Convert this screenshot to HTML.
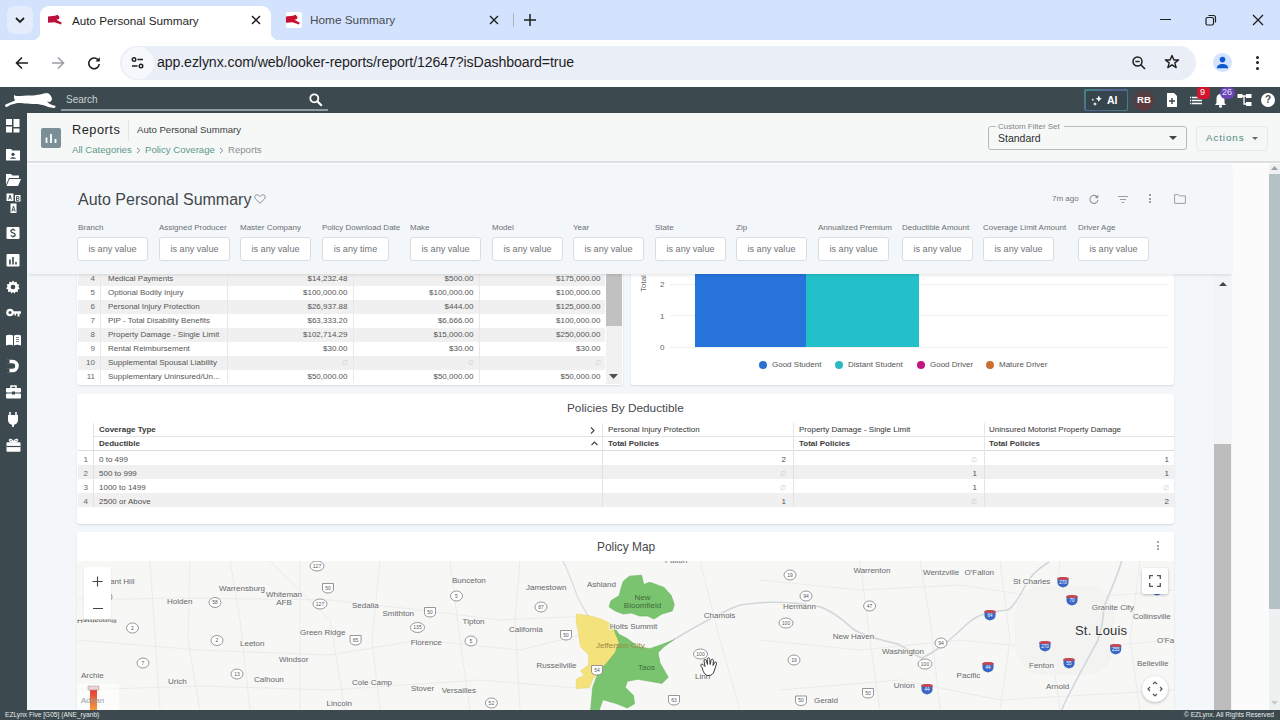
<!DOCTYPE html>
<html><head><meta charset="utf-8">
<style>
*{box-sizing:border-box;margin:0;padding:0}
html,body{width:1280px;height:720px;overflow:hidden;background:#fff;font-family:"Liberation Sans",sans-serif;position:relative}
.a{position:absolute}
.t{position:absolute;white-space:nowrap;line-height:1}
svg{position:absolute;overflow:visible}
#tabs{left:0;top:0;width:1280px;height:40px;background:#d3e3fd}
#toolbar{left:0;top:40px;width:1280px;height:47px;background:#fff}
#url{left:120px;top:46px;width:1076px;height:34px;border-radius:17px;background:#eaeef7}
#hdr{left:0;top:87px;width:1280px;height:26px;background:#3c4a4f}
#side{left:0;top:113px;width:27px;height:607px;background:#3c4a4f}
#foot{left:0;top:710px;width:1280px;height:10px;background:#3c4a4f}
#phead{left:27px;top:113px;width:1253px;height:50px;background:#f6f7f7;border-bottom:2px solid #dcdfe0}
#canvas{left:27px;top:164px;width:1242px;height:546px;background:#fbfbfb}
.card{position:absolute;background:#fff;border-radius:3px;box-shadow:0 1px 2px rgba(0,0,0,.12)}
.fl{position:absolute;top:224px;font-size:8px;color:#6b6f73;white-space:nowrap;line-height:1}
.fb{position:absolute;top:237px;height:24px;width:71px;border:1px solid #dadde0;border-radius:3px;background:#fff;font-size:9.1px;color:#707478;text-align:center;line-height:22px;white-space:nowrap}
.si{left:6px}
</style></head><body>
<!-- ============ Chrome tab strip ============ -->
<div id="tabs" class="a"></div>
<div class="a" style="left:7px;top:6px;width:26px;height:28px;border-radius:8px;background:#e5edfc"></div>
<svg style="left:14px;top:15px" width="12" height="10" viewBox="0 0 12 10"><path d="M2 3l4 4 4-4" fill="none" stroke="#1f1f1f" stroke-width="1.8"/></svg>
<!-- active tab -->
<div class="a" style="left:40px;top:6px;width:231px;height:34px;background:#fff;border-radius:9px 9px 0 0"></div>
<div class="a" style="left:32px;top:32px;width:8px;height:8px;background:radial-gradient(circle at 0 0,#d3e3fd 8px,#fff 8.5px)"></div>
<div class="a" style="left:271px;top:32px;width:8px;height:8px;background:radial-gradient(circle at 100% 0,#d3e3fd 8px,#fff 8.5px)"></div>
<svg style="left:44px;top:8px" width="24" height="24" viewBox="44 8 24 24"><path d="M48 16.5 L55 15.8 L57.5 14.8 L59.5 17 L59 19 L56.5 19.8 L61.8 22.8 L61 24.5 L54.5 22.2 L48 22.8 Z" fill="#b8123a"/></svg>
<div class="t" style="left:72px;top:15px;font-size:11.7px;color:#1f1f1f">Auto Personal Summary</div>
<svg style="left:251px;top:15px" width="10" height="10" viewBox="0 0 10 10"><path d="M1 1L9 9M9 1L1 9" stroke="#1f1f1f" stroke-width="1.5"/></svg>
<!-- second tab -->
<div class="a" style="left:286px;top:12px;width:16px;height:16px;background:#fff;border-radius:2px"></div>
<svg style="left:282px;top:8px" width="24" height="24" viewBox="44 8 24 24"><path d="M48 16.5 L55 15.8 L57.5 14.8 L59.5 17 L59 19 L56.5 19.8 L61.8 22.8 L61 24.5 L54.5 22.2 L48 22.8 Z" fill="#c8102e"/></svg>
<div class="t" style="left:310px;top:15px;font-size:11.8px;color:#474b53">Home Summary</div>
<svg style="left:489px;top:15px" width="10" height="10" viewBox="0 0 10 10"><path d="M1 1L9 9M9 1L1 9" stroke="#1f1f1f" stroke-width="1.4"/></svg>
<div class="a" style="left:513px;top:13px;width:1px;height:14px;background:#a8b4c8"></div>
<svg style="left:524px;top:14px" width="12" height="12" viewBox="0 0 12 12"><path d="M6 0V12M0 6H12" stroke="#1f1f1f" stroke-width="1.5"/></svg>
<!-- window controls -->
<div class="a" style="left:1160px;top:19px;width:11px;height:1.3px;background:#1f1f1f"></div>
<svg style="left:1205px;top:14px" width="12" height="12" viewBox="0 0 12 12"><rect x="1" y="3.5" width="7.5" height="7.5" rx="1.5" fill="none" stroke="#1f1f1f" stroke-width="1.2"/><path d="M3.5 1.5h5a2 2 0 0 1 2 2v5" fill="none" stroke="#1f1f1f" stroke-width="1.2"/></svg>
<svg style="left:1252px;top:14px" width="12" height="12" viewBox="0 0 12 12"><path d="M1 1L11 11M11 1L1 11" stroke="#1f1f1f" stroke-width="1.3"/></svg>
<!-- ============ toolbar ============ -->
<div id="toolbar" class="a"></div>
<svg style="left:15px;top:56px" width="14" height="14" viewBox="0 0 14 14"><path d="M13 7H2M7 1.5L1.5 7L7 12.5" fill="none" stroke="#1f1f1f" stroke-width="1.6"/></svg>
<svg style="left:51px;top:56px" width="14" height="14" viewBox="0 0 14 14"><path d="M1 7H12M7 1.5L12.5 7L7 12.5" fill="none" stroke="#9aa0a6" stroke-width="1.6"/></svg>
<svg style="left:87px;top:56px" width="14" height="14" viewBox="0 0 14 14"><path d="M11.5 4.5A5.3 5.3 0 1 0 12.3 8" fill="none" stroke="#1f1f1f" stroke-width="1.6"/><path d="M12.8 1.2V5.6H8.4Z" fill="#1f1f1f"/></svg>
<div id="url" class="a"></div>
<div class="a" style="left:122px;top:47px;width:32px;height:32px;border-radius:16px;background:#f6f8fc"></div>
<svg style="left:131px;top:57px" width="13" height="12" viewBox="0 0 13 12"><circle cx="3" cy="2.5" r="1.8" fill="none" stroke="#1f1f1f" stroke-width="1.4"/><path d="M6.5 2.5H12M1 9H6.5" stroke="#1f1f1f" stroke-width="1.6"/><circle cx="10" cy="9" r="1.8" fill="none" stroke="#1f1f1f" stroke-width="1.4"/></svg>
<div class="t" style="left:157px;top:55px;font-size:14.15px;color:#1f1f1f;letter-spacing:-0.1px">app.ezlynx.com/web/looker-reports/report/12647?isDashboard=true</div>
<svg style="left:1132px;top:56px" width="14" height="14" viewBox="0 0 14 14"><circle cx="5.5" cy="5.5" r="4.5" fill="none" stroke="#1f1f1f" stroke-width="1.5"/><path d="M3.3 5.5H7.7" stroke="#1f1f1f" stroke-width="1.4"/><path d="M8.8 8.8L13 13" stroke="#1f1f1f" stroke-width="1.6"/></svg>
<svg style="left:1164px;top:54px" width="16" height="16" viewBox="0 0 16 16"><path d="M8 1.5L9.9 6H14.6L10.8 8.9L12.2 13.6L8 10.8L3.8 13.6L5.2 8.9L1.4 6H6.1Z" fill="none" stroke="#1f1f1f" stroke-width="1.4" stroke-linejoin="round"/></svg>
<div class="a" style="left:1213px;top:53px;width:19px;height:19px;border-radius:10px;background:#d3e3fd"></div>
<svg style="left:1215px;top:55px" width="15" height="15" viewBox="0 0 15 15"><circle cx="7.5" cy="4.6" r="2.8" fill="#0b57d0"/><path d="M1.8 13.3C2 10 4.8 9 7.5 9S13 10 13.2 13.3Z" fill="#0b57d0"/></svg>
<div class="a" style="left:1256px;top:56px;width:3px;height:3px;border-radius:2px;background:#1f1f1f"></div>
<div class="a" style="left:1256px;top:61px;width:3px;height:3px;border-radius:2px;background:#1f1f1f"></div>
<div class="a" style="left:1256px;top:67px;width:3px;height:3px;border-radius:2px;background:#1f1f1f"></div>

<!-- ============ App header ============ -->
<div id="hdr" class="a"></div>
<svg style="left:0;top:86px" width="64" height="28" viewBox="0 86 64 28"><path d="M14 95 C15 95.5 16 96 16.5 96 C22 96 26 95.5 30 95.5 C34 95.5 37 95 40 94.5 C43 94 45 93 47 93 C49 93.5 50 94.5 50.5 95.5 C51.5 97 52 98 52 99 C51.5 101 50.5 102 49.5 102 L47 101.5 C48 102.5 49 103.5 50 104 C52 105 54 105.5 55.5 106 C55.5 107 55 108 54 108 C52 107.8 50 107.5 48 107 C46 106 44.5 105.5 43 105 C40 104.5 38 104 35 104 C31 104 28 103.8 25 103.5 C22 103.3 19.5 103 17.5 103 C15 103.8 12 104.5 10 105 C8.5 106 7.5 107 6.5 107 C5.5 107 5 106 5 105 C6.5 104 8 103.5 9 103 C11 102 13 101.3 15 100.5 C14.5 99.5 14 98.5 14 97.5Z" fill="#fff"/></svg>
<div class="t" style="left:66px;top:95px;font-size:10px;color:#c9d0d3">Search</div>
<svg style="left:309px;top:93px" width="14" height="14" viewBox="0 0 14 14"><circle cx="5.3" cy="5.3" r="4" fill="none" stroke="#fff" stroke-width="1.8"/><path d="M8.3 8.3L12.8 12.8" stroke="#fff" stroke-width="2.2"/></svg>
<div class="a" style="left:61px;top:109px;width:267px;height:2px;background:#8e9ba0"></div>
<!-- right icons -->
<div class="a" style="left:1084px;top:89px;width:44px;height:22px;border-radius:2px;background:linear-gradient(135deg,#3f8a83,#55609a 50%,#3f8a83)"></div><div class="a" style="left:1085.5px;top:90.5px;width:41px;height:19px;border-radius:1px;background:#36444b"></div>
<svg style="left:1088px;top:92px" width="16" height="16" viewBox="1088 92 16 16"><path d="M1098.8 95.5Q1099.3 98.3 1102 98.8Q1099.3 99.3 1098.8 102Q1098.3 99.3 1095.6 98.8Q1098.3 98.3 1098.8 95.5Z" fill="#fff"/><path d="M1095 102Q1095.3 103.7 1097 104Q1095.3 104.3 1095 106Q1094.7 104.3 1093 104Q1094.7 103.7 1095 102Z" fill="#f0f0f0"/><circle cx="1092.8" cy="99.8" r="1" fill="#e0e0e0"/></svg>
<div class="t" style="left:1107px;top:95px;font-size:10.5px;font-weight:bold;color:#fff">AI</div>
<div class="a" style="left:1133px;top:89px;width:22px;height:22px;border-radius:11px;background:radial-gradient(circle at 50% 60%,#5b3a40 40%,#45444a 75%,#3c4a4f 100%)"></div>
<div class="t" style="left:1137px;top:95px;font-size:9.6px;font-weight:bold;color:#fff">RB</div>
<svg style="left:1166px;top:92px" width="12" height="16" viewBox="0 0 12 16"><path d="M1 1H8L11 4V15H1Z" fill="#fff"/><path d="M6 6V12M3 9H9" stroke="#3c4a4f" stroke-width="1.5"/></svg>
<svg style="left:1189px;top:96px" width="14" height="10" viewBox="0 0 14 10"><path d="M1 1.5H13M1 4.5H13M1 7.5H13" stroke="#fff" stroke-width="1.4" stroke-dasharray="1.2 0.8 20 0"/></svg>
<div class="a" style="left:1197px;top:87px;width:13px;height:12px;border-radius:3px;background:#d0162e"></div>
<div class="t" style="left:1200px;top:88px;font-size:9px;color:#fff">9</div>
<svg style="left:1214px;top:93px" width="13" height="15" viewBox="0 0 13 15"><path d="M6.5 1C3.5 1 2.5 3.5 2.5 6V10L1 12H12L10.5 10V6C10.5 3.5 9.5 1 6.5 1Z" fill="#fff"/><circle cx="6.5" cy="13.3" r="1.5" fill="#fff"/></svg>
<div class="a" style="left:1220px;top:87px;width:15px;height:12px;border-radius:6px;background:#6a46b5"></div>
<div class="t" style="left:1222px;top:88px;font-size:9px;color:#e8e0ff">26</div>
<svg style="left:1237px;top:93px" width="15" height="14" viewBox="0 0 15 14"><rect x="0.5" y="1" width="5" height="4" fill="#fff"/><rect x="9" y="1" width="5.5" height="4" fill="#fff"/><rect x="9" y="9" width="5.5" height="4" fill="#fff"/><path d="M5 3H9M7 3V11H9" stroke="#fff" stroke-width="1.3" fill="none"/></svg>
<div class="a" style="left:1261px;top:93px;width:14px;height:14px;border-radius:7px;background:#fff"></div>
<div class="t" style="left:1265px;top:95px;font-size:10px;font-weight:bold;color:#3c4a4f">?</div>

<!-- ============ Sidebar ============ -->
<div id="side" class="a"></div>
<svg class="si" style="top:119px" width="14" height="14" viewBox="0 0 14 14"><rect x="0" y="0" width="6" height="6" fill="#fff"/><rect x="7.5" y="0" width="6" height="8" fill="#fff"/><rect x="0" y="7.5" width="6" height="6" fill="#fff"/><rect x="7.5" y="9.5" width="6" height="4" fill="#fff"/></svg>
<svg class="si" style="top:148px" width="14" height="13" viewBox="0 0 14 13"><path d="M0 1H5L6.5 2.5H14V12.5H0Z" fill="#fff"/><circle cx="7" cy="6.3" r="1.6" fill="#3c4a4f"/><path d="M4 10.8C4.5 8.8 9.5 8.8 10 10.8Z" fill="#3c4a4f"/></svg>
<svg class="si" style="top:174px" width="15" height="12" viewBox="0 0 15 12"><path d="M0 0H5L6.5 1.5H13V4H3L0 11Z" fill="#fff"/><path d="M3.5 5H15L12 12H0.5Z" fill="#fff"/></svg>
<svg class="si" style="top:193px" width="15" height="21" viewBox="0 0 15 21"><rect x="0.5" y="0.5" width="7" height="7.5" fill="#fff"/><rect x="9" y="2" width="5.5" height="6.5" fill="#fff"/><rect x="4.5" y="10.5" width="6" height="9.5" fill="#fff"/><path d="M2.5 6.5L4 2L5.5 6.5M3 5H5M10.5 7.5V3.5H12a1 1 0 0 1 0 2H10.5M12 5.5a1 1 0 0 1 0 2H10.5M5.8 18.5L7.5 13L9.2 18.5M6.3 17H8.7" stroke="#3c4a4f" stroke-width="0.9" fill="none"/></svg>
<svg class="si" style="top:227px" width="14" height="13" viewBox="0 0 14 13"><rect x="0.5" y="0" width="13" height="12" rx="1" fill="#fff"/><path d="M9 3.5C8.5 2.8 7.8 2.6 7 2.6C5.6 2.6 4.9 3.3 4.9 4.2C4.9 6.2 9.2 5.4 9.2 7.7C9.2 8.7 8.3 9.4 7 9.4C6 9.4 5.2 9 4.8 8.3M7 1.5V2.6M7 9.4V10.5" fill="none" stroke="#3c4a4f" stroke-width="1.3"/></svg>
<svg class="si" style="top:254px" width="14" height="13" viewBox="0 0 14 13"><rect x="0.5" y="0" width="13" height="12.5" rx="1" fill="#fff"/><path d="M4 10.5V5.5M7 10.5V3M10 10.5V8" stroke="#3c4a4f" stroke-width="1.6"/></svg>
<svg class="si" style="top:280px" width="14" height="14" viewBox="0 0 14 14"><path d="M7 0.5L8.4 2.3L10.6 1.7L11 4L13.3 4.6L12.4 6.7L13.8 8.4L11.8 9.6L11.9 11.9L9.6 11.7L8.4 13.6L7 12.1L5.4 13.6L4.3 11.6L2 11.9L2.1 9.6L0.2 8.4L1.5 6.6L0.7 4.5L3 4L3.4 1.7L5.6 2.3Z" fill="#fff"/><circle cx="7" cy="7" r="2.3" fill="#3c4a4f"/></svg>
<svg class="si" style="top:308px" width="15" height="10" viewBox="0 0 15 10"><circle cx="4" cy="4.5" r="3.8" fill="#fff"/><circle cx="4" cy="4.5" r="1.5" fill="#3c4a4f"/><path d="M7 3.3H15V5.7H13.5V8.5H11.5V5.7H10V7.5H8.5V5.7H7Z" fill="#fff"/></svg>
<svg class="si" style="top:334px" width="15" height="12" viewBox="0 0 15 12"><path d="M0 1.5C2.5 0.5 5 0.5 7 1.5V11.5C5 10.5 2.5 10.5 0 11.5Z" fill="#fff"/><path d="M8 1.5C10 0.5 12.5 0.5 15 1.5V11.5C12.5 10.5 10 10.5 8 11.5Z" fill="#fff"/><path d="M10 3.5H13M10 5.5H13M10 7.5H13" stroke="#3c4a4f" stroke-width="0.7"/></svg>
<svg class="si" style="top:359px" width="14" height="14" viewBox="0 0 14 14"><path d="M1 2.5H6.5A4.5 4.5 0 0 1 6.5 11.5H1" fill="none" stroke="#fff" stroke-width="3.6"/><path d="M0 2.5H3M0 11.5H3" stroke="#3c4a4f" stroke-width="4" stroke-dasharray="0"/><path d="M3.2 0.7V4.3M3.2 9.7V13.3" stroke="#3c4a4f" stroke-width="0.8"/></svg>
<svg class="si" style="top:385px" width="15" height="14" viewBox="0 0 15 14"><path d="M5 3V1H10V3" fill="none" stroke="#fff" stroke-width="1.5"/><rect x="0" y="3" width="15" height="4.5" rx="1" fill="#fff"/><rect x="0" y="8.5" width="15" height="5" rx="1" fill="#fff"/><rect x="6" y="6.5" width="3" height="3" fill="#3c4a4f"/></svg>
<svg class="si" style="top:412px" width="14" height="15" viewBox="0 0 14 15"><path d="M4 0V3M10 0V3" stroke="#fff" stroke-width="1.6"/><path d="M2 3H12V8A5 5 0 0 1 2 8Z" fill="#fff"/><path d="M7 12V15" stroke="#fff" stroke-width="1.8"/></svg>
<svg class="si" style="top:438px" width="15" height="14" viewBox="0 0 15 14"><path d="M7.5 4C6 1 3 0.5 3.5 2.5C4 4 6 4 7.5 4C9 4 11 4 11.5 2.5C12 0.5 9 1 7.5 4Z" fill="none" stroke="#fff" stroke-width="1.3"/><rect x="0.5" y="4.3" width="14" height="9.5" rx="0.8" fill="#fff"/><path d="M0.5 8.5H14.5" stroke="#3c4a4f" stroke-width="1.2"/></svg>

<!-- ============ page header ============ -->
<div id="phead" class="a"></div>
<div class="a" style="left:41px;top:128px;width:20px;height:20px;border-radius:2px;background:#7b8f96"></div>
<svg style="left:41px;top:128px" width="20" height="20" viewBox="0 0 20 20"><path d="M5.5 15V9.5M10 15V6M14.5 15V11" stroke="#fff" stroke-width="1.8"/></svg>
<div class="t" style="left:72px;top:124px;font-size:12.8px;letter-spacing:0.5px;color:#1f2326">Reports</div>
<div class="a" style="left:128px;top:120px;width:1px;height:21px;background:#e1e4e5"></div>
<div class="t" style="left:137px;top:125px;font-size:9.6px;color:#3b3f42">Auto Personal Summary</div>
<div class="t" style="left:72px;top:145px;font-size:9.6px;color:#5e9a8c">All Categories</div>
<svg style="left:136px;top:146.5px" width="5" height="7" viewBox="0 0 5 7"><path d="M1 0.8L3.8 3.5L1 6.2" fill="none" stroke="#7a8588" stroke-width="1"/></svg>
<div class="t" style="left:145px;top:145px;font-size:9.6px;color:#5e9a8c">Policy Coverage</div>
<svg style="left:219px;top:146.5px" width="5" height="7" viewBox="0 0 5 7"><path d="M1 0.8L3.8 3.5L1 6.2" fill="none" stroke="#7a8588" stroke-width="1"/></svg>
<div class="t" style="left:228px;top:145px;font-size:9.6px;color:#8a9194">Reports</div>
<!-- filter set -->
<div class="a" style="left:988px;top:126px;width:199px;height:24px;border:1px solid #b5b9bb;border-radius:3px"></div>
<div class="a" style="left:996px;top:122px;width:68px;height:8px;background:#f6f7f7"></div>
<div class="t" style="left:998px;top:123px;font-size:8px;color:#80868a">Custom Filter Set</div>
<div class="t" style="left:998px;top:133px;font-size:10.5px;color:#2b2f33">Standard</div>
<svg style="left:1169px;top:136px" width="8" height="5" viewBox="0 0 8 5"><path d="M0 0H8L4 4Z" fill="#444"/></svg>
<div class="a" style="left:1196px;top:126px;width:72px;height:25px;border:1px solid #e6e8e9;border-radius:3px;background:#f5f6f6"></div>
<div class="t" style="left:1206px;top:133px;font-size:9.8px;color:#4a8a7b;letter-spacing:0.9px">Actions</div>
<svg style="left:1252px;top:137px" width="6" height="4" viewBox="0 0 6 4"><path d="M0 0H6L3 3Z" fill="#666"/></svg>

<!-- ============ Dashboard canvas ============ -->
<div id="canvas" class="a"></div>
<div class="a" style="left:27px;top:164px;width:1205px;height:546px;background:#f4f7fa"></div>
<div id="dash"></div>
<!-- ===== filter panel ===== -->
<div class="a" style="left:27px;top:164px;width:1205px;height:110px;background:#f4f7fa;box-shadow:0 2px 3px -1px rgba(0,0,0,.12);z-index:5"></div>
<div style="position:absolute;left:0;top:0;z-index:6">
<div class="t" style="left:78px;top:192px;font-size:16px;color:#43474b">Auto Personal Summary</div>
<svg style="left:254px;top:194px" width="12" height="10" viewBox="0 0 12 10"><path d="M6 9.3L1.6 5C0.2 3.6 0.6 1 2.8 0.8C4.2 0.7 5.4 1.6 6 2.6C6.6 1.6 7.8 0.7 9.2 0.8C11.4 1 11.8 3.6 10.4 5Z" fill="none" stroke="#8a8e92" stroke-width="1"/></svg>
<div class="t" style="left:1052px;top:195px;font-size:8px;color:#6f7377">7m ago</div>
<svg style="left:1089px;top:194px" width="10" height="10" viewBox="0 0 10 10"><path d="M8.3 3.2A4 4 0 1 0 8.9 6" fill="none" stroke="#8f9498" stroke-width="1.1"/><path d="M9.3 0.8V4.2H5.9Z" fill="#8f9498"/></svg>
<svg style="left:1118px;top:194.5px" width="10" height="9" viewBox="0 0 10 9"><path d="M0 1.5H10M2 4.5H8M3.8 7.5H6.2" stroke="#9a9ea2" stroke-width="1"/></svg>
<div class="a" style="left:1149px;top:194px;width:2px;height:2px;border-radius:1px;background:#7d8185"></div>
<div class="a" style="left:1149px;top:197.5px;width:2px;height:2px;border-radius:1px;background:#7d8185"></div>
<div class="a" style="left:1149px;top:201px;width:2px;height:2px;border-radius:1px;background:#7d8185"></div>
<svg style="left:1174px;top:194px" width="12" height="10" viewBox="0 0 12 10"><path d="M0.6 0.6H4.3L5.5 1.9H11.4V9.4H0.6Z" fill="none" stroke="#9a9ea2" stroke-width="1"/></svg>
<div class="fl" style="left:78px">Branch</div>
<div class="fl" style="left:159px">Assigned Producer</div>
<div class="fl" style="left:240px">Master Company</div>
<div class="fl" style="left:322px">Policy Download Date</div>
<div class="fl" style="left:410px">Make</div>
<div class="fl" style="left:492px">Model</div>
<div class="fl" style="left:573px">Year</div>
<div class="fl" style="left:655px">State</div>
<div class="fl" style="left:736px">Zip</div>
<div class="fl" style="left:818px">Annualized Premium</div>
<div class="fl" style="left:902px">Deductible Amount</div>
<div class="fl" style="left:983px">Coverage Limit Amount</div>
<div class="fl" style="left:1078px">Driver Age</div>
<div class="fb" style="left:77px">is any value</div>
<div class="fb" style="left:159px">is any value</div>
<div class="fb" style="left:240px">is any value</div>
<div class="fb" style="left:322px;width:67px">is any time</div>
<div class="fb" style="left:410px">is any value</div>
<div class="fb" style="left:492px">is any value</div>
<div class="fb" style="left:573px">is any value</div>
<div class="fb" style="left:655px">is any value</div>
<div class="fb" style="left:736px">is any value</div>
<div class="fb" style="left:818px">is any value</div>
<div class="fb" style="left:902px">is any value</div>
<div class="fb" style="left:983px">is any value</div>
<div class="fb" style="left:1078px">is any value</div>
</div>
<!-- ===== table card ===== -->
<div class="card" style="left:77px;top:230px;width:546px;height:155px"></div>
<div class="a" style="left:78px;top:271.5px;width:527px;height:14px;background:#f0f0f0"></div>
<div class="a" style="left:78px;top:285.5px;width:527px;height:14px;background:#ffffff"></div>
<div class="a" style="left:78px;top:299.5px;width:527px;height:14px;background:#f0f0f0"></div>
<div class="a" style="left:78px;top:313.5px;width:527px;height:14px;background:#ffffff"></div>
<div class="a" style="left:78px;top:327.5px;width:527px;height:14px;background:#f0f0f0"></div>
<div class="a" style="left:78px;top:341.5px;width:527px;height:14px;background:#ffffff"></div>
<div class="a" style="left:78px;top:355.5px;width:527px;height:14px;background:#f0f0f0"></div>
<div class="a" style="left:78px;top:369.5px;width:527px;height:14px;background:#ffffff"></div>
<div class="a" style="left:100px;top:271px;width:1px;height:112px;background:#e8e8e8"></div>
<div class="a" style="left:227px;top:271px;width:1px;height:112px;background:#e8e8e8"></div>
<div class="a" style="left:353px;top:271px;width:1px;height:112px;background:#e8e8e8"></div>
<div class="a" style="left:479px;top:271px;width:1px;height:112px;background:#e8e8e8"></div>
<div class="t" style="left:60px;width:35px;text-align:right;top:275px;font-size:8px;color:#666">4</div>
<div class="t" style="left:108px;top:275px;font-size:8px;color:#555">Medical Payments</div>
<div class="t" style="left:267.5px;width:80px;text-align:right;top:275px;font-size:8px;color:#555">$14,232.48</div>
<div class="t" style="left:393.5px;width:80px;text-align:right;top:275px;font-size:8px;color:#555">$500.00</div>
<div class="t" style="left:520.5px;width:80px;text-align:right;top:275px;font-size:8px;color:#555">$175,000.00</div>
<div class="t" style="left:60px;width:35px;text-align:right;top:289px;font-size:8px;color:#666">5</div>
<div class="t" style="left:108px;top:289px;font-size:8px;color:#555">Optional Bodily Injury</div>
<div class="t" style="left:267.5px;width:80px;text-align:right;top:289px;font-size:8px;color:#555">$100,000.00</div>
<div class="t" style="left:393.5px;width:80px;text-align:right;top:289px;font-size:8px;color:#555">$100,000.00</div>
<div class="t" style="left:520.5px;width:80px;text-align:right;top:289px;font-size:8px;color:#555">$100,000.00</div>
<div class="t" style="left:60px;width:35px;text-align:right;top:303px;font-size:8px;color:#666">6</div>
<div class="t" style="left:108px;top:303px;font-size:8px;color:#555">Personal Injury Protection</div>
<div class="t" style="left:267.5px;width:80px;text-align:right;top:303px;font-size:8px;color:#555">$26,937.88</div>
<div class="t" style="left:393.5px;width:80px;text-align:right;top:303px;font-size:8px;color:#555">$444.00</div>
<div class="t" style="left:520.5px;width:80px;text-align:right;top:303px;font-size:8px;color:#555">$125,000.00</div>
<div class="t" style="left:60px;width:35px;text-align:right;top:317px;font-size:8px;color:#666">7</div>
<div class="t" style="left:108px;top:317px;font-size:8px;color:#555">PIP - Total Disability Benefits</div>
<div class="t" style="left:267.5px;width:80px;text-align:right;top:317px;font-size:8px;color:#555">$63,333.20</div>
<div class="t" style="left:393.5px;width:80px;text-align:right;top:317px;font-size:8px;color:#555">$6,666.00</div>
<div class="t" style="left:520.5px;width:80px;text-align:right;top:317px;font-size:8px;color:#555">$100,000.00</div>
<div class="t" style="left:60px;width:35px;text-align:right;top:331px;font-size:8px;color:#666">8</div>
<div class="t" style="left:108px;top:331px;font-size:8px;color:#555">Property Damage - Single Limit</div>
<div class="t" style="left:267.5px;width:80px;text-align:right;top:331px;font-size:8px;color:#555">$102,714.29</div>
<div class="t" style="left:393.5px;width:80px;text-align:right;top:331px;font-size:8px;color:#555">$15,000.00</div>
<div class="t" style="left:520.5px;width:80px;text-align:right;top:331px;font-size:8px;color:#555">$250,000.00</div>
<div class="t" style="left:60px;width:35px;text-align:right;top:345px;font-size:8px;color:#666">9</div>
<div class="t" style="left:108px;top:345px;font-size:8px;color:#555">Rental Reimbursement</div>
<div class="t" style="left:267.5px;width:80px;text-align:right;top:345px;font-size:8px;color:#555">$30.00</div>
<div class="t" style="left:393.5px;width:80px;text-align:right;top:345px;font-size:8px;color:#555">$30.00</div>
<div class="t" style="left:520.5px;width:80px;text-align:right;top:345px;font-size:8px;color:#555">$30.00</div>
<div class="t" style="left:60px;width:35px;text-align:right;top:359px;font-size:8px;color:#666">10</div>
<div class="t" style="left:108px;top:359px;font-size:8px;color:#555">Supplemental Spousal Liability</div>
<div class="t" style="left:287.5px;width:60px;text-align:right;top:359px;font-size:7px;color:#d4d4d4">∅</div>
<div class="t" style="left:413.5px;width:60px;text-align:right;top:359px;font-size:7px;color:#d4d4d4">∅</div>
<div class="t" style="left:540.5px;width:60px;text-align:right;top:359px;font-size:7px;color:#d4d4d4">∅</div>
<div class="t" style="left:60px;width:35px;text-align:right;top:373px;font-size:8px;color:#666">11</div>
<div class="t" style="left:108px;top:373px;font-size:8px;color:#555">Supplementary Uninsured/Un...</div>
<div class="t" style="left:267.5px;width:80px;text-align:right;top:373px;font-size:8px;color:#555">$50,000.00</div>
<div class="t" style="left:393.5px;width:80px;text-align:right;top:373px;font-size:8px;color:#555">$50,000.00</div>
<div class="t" style="left:520.5px;width:80px;text-align:right;top:373px;font-size:8px;color:#555">$50,000.00</div>
<div class="a" style="left:606px;top:271px;width:16px;height:113px;background:#f1f1f1"></div>
<div class="a" style="left:606px;top:271px;width:16px;height:55px;background:#c1c1c1"></div>
<svg style="left:609px;top:374px" width="9" height="5" viewBox="0 0 9 5"><path d="M0 0H9L4.5 5Z" fill="#505050"/></svg>
<!-- ===== chart card ===== -->
<div class="card" style="left:631px;top:230px;width:543px;height:155px"></div>
<div class="a" style="left:670px;top:284px;width:498px;height:1px;background:#f0f0f0"></div>
<div class="a" style="left:670px;top:315px;width:498px;height:1px;background:#f0f0f0"></div>
<div class="a" style="left:670px;top:347px;width:498px;height:1px;background:#f0f0f0"></div>
<div class="a" style="left:695px;top:270px;width:111px;height:77px;background:#2674db"></div>
<div class="a" style="left:806px;top:270px;width:113px;height:77px;background:#22c1c9"></div>
<div class="t" style="left:660px;top:281px;font-size:8px;color:#666">2</div>
<div class="t" style="left:660px;top:312.5px;font-size:8px;color:#666">1</div>
<div class="t" style="left:660px;top:344px;font-size:8px;color:#666">0</div>
<div class="t" style="left:640px;top:292px;font-size:8px;color:#666;transform:rotate(-90deg);transform-origin:0 0">Total</div>
<div class="a" style="left:759px;top:361px;width:8px;height:8px;border-radius:4px;background:#2a6fd1"></div>
<div class="t" style="left:772px;top:361px;font-size:8px;color:#555">Good Student</div>
<div class="a" style="left:835px;top:361px;width:8px;height:8px;border-radius:4px;background:#2bb8c0"></div>
<div class="t" style="left:848px;top:361px;font-size:8px;color:#555">Distant Student</div>
<div class="a" style="left:917px;top:361px;width:8px;height:8px;border-radius:4px;background:#c6137e"></div>
<div class="t" style="left:930px;top:361px;font-size:8px;color:#555">Good Driver</div>
<div class="a" style="left:986px;top:361px;width:8px;height:8px;border-radius:4px;background:#c87132"></div>
<div class="t" style="left:999px;top:361px;font-size:8px;color:#555">Mature Driver</div>
<!-- ===== dashboard scrollbar ===== -->
<div class="a" style="left:1214px;top:274px;width:18px;height:436px;background:#f2f4f6"></div>
<svg style="left:1218.5px;top:282px" width="8" height="4" viewBox="0 0 8 4"><path d="M0 4H8L4 0Z" fill="#444"/></svg>
<div class="a" style="left:1214px;top:444px;width:17px;height:266px;background:#bdbdbd"></div>
<!-- ===== policies by deductible ===== -->
<div class="card" style="left:77px;top:394px;width:1097px;height:130px"></div>
<div class="t" style="left:567px;top:403px;font-size:11.8px;color:#45494d">Policies By Deductible</div>
<div class="a" style="left:93px;top:423px;width:1px;height:84px;background:#e3e3e3"></div>
<div class="a" style="left:93px;top:436px;width:1081px;height:1px;background:#e3e3e3"></div>
<div class="a" style="left:78px;top:450px;width:1096px;height:1px;background:#dcdcdc"></div>
<div class="a" style="left:602px;top:423px;width:1px;height:84px;background:#e6e6e6"></div>
<div class="a" style="left:793px;top:423px;width:1px;height:84px;background:#e6e6e6"></div>
<div class="a" style="left:984px;top:423px;width:1px;height:84px;background:#e6e6e6"></div>
<div class="t" style="left:99px;top:426px;font-size:8px;font-weight:bold;color:#3a3a3a">Coverage Type</div>
<div class="t" style="left:99px;top:439.5px;font-size:8px;font-weight:bold;color:#3a3a3a">Deductible</div>
<svg style="left:590px;top:427px" width="5" height="7" viewBox="0 0 5 7"><path d="M1 0.5L4 3.5L1 6.5" fill="none" stroke="#444" stroke-width="1.1"/></svg>
<svg style="left:591px;top:441px" width="7" height="5" viewBox="0 0 7 5"><path d="M0.5 4L3.5 1L6.5 4" fill="none" stroke="#444" stroke-width="1.1"/></svg>
<div class="t" style="left:608px;top:426px;font-size:8px;color:#333">Personal Injury Protection</div>
<div class="t" style="left:608px;top:439.5px;font-size:8px;font-weight:bold;color:#3a3a3a">Total Policies</div>
<div class="t" style="left:799px;top:426px;font-size:8px;color:#333">Property Damage - Single Limit</div>
<div class="t" style="left:799px;top:439.5px;font-size:8px;font-weight:bold;color:#3a3a3a">Total Policies</div>
<div class="t" style="left:989px;top:426px;font-size:8px;color:#333">Uninsured Motorist Property Damage</div>
<div class="t" style="left:989px;top:439.5px;font-size:8px;font-weight:bold;color:#3a3a3a">Total Policies</div>
<div class="a" style="left:78px;top:465px;width:1096px;height:14px;background:#f0f0f0"></div>
<div class="a" style="left:78px;top:493px;width:1096px;height:14px;background:#f0f0f0"></div>
<div class="a" style="left:93px;top:451px;width:1px;height:56px;background:#e3e3e3"></div>
<div class="a" style="left:602px;top:451px;width:1px;height:56px;background:#e3e3e3"></div>
<div class="a" style="left:793px;top:451px;width:1px;height:56px;background:#e3e3e3"></div>
<div class="a" style="left:984px;top:451px;width:1px;height:56px;background:#e3e3e3"></div>
<div class="t" style="left:70px;width:18px;text-align:right;top:455.5px;font-size:8px;color:#666">1</div>
<div class="t" style="left:99px;top:455.5px;font-size:8px;color:#4f4f4f">0 to 499</div>
<div class="t" style="left:746px;width:40px;text-align:right;top:455.5px;font-size:8px;color:#4f4f4f">2</div>
<div class="t" style="left:937px;width:40px;text-align:right;top:455.5px;font-size:7px;color:#d0d0d0">∅</div>
<div class="t" style="left:1129px;width:40px;text-align:right;top:455.5px;font-size:8px;color:#4f4f4f">1</div>
<div class="t" style="left:70px;width:18px;text-align:right;top:469.5px;font-size:8px;color:#666">2</div>
<div class="t" style="left:99px;top:469.5px;font-size:8px;color:#4f4f4f">500 to 999</div>
<div class="t" style="left:746px;width:40px;text-align:right;top:469.5px;font-size:7px;color:#d0d0d0">∅</div>
<div class="t" style="left:937px;width:40px;text-align:right;top:469.5px;font-size:8px;color:#4f4f4f">1</div>
<div class="t" style="left:1129px;width:40px;text-align:right;top:469.5px;font-size:8px;color:#4f4f4f">1</div>
<div class="t" style="left:70px;width:18px;text-align:right;top:483.5px;font-size:8px;color:#666">3</div>
<div class="t" style="left:99px;top:483.5px;font-size:8px;color:#4f4f4f">1000 to 1499</div>
<div class="t" style="left:746px;width:40px;text-align:right;top:483.5px;font-size:7px;color:#d0d0d0">∅</div>
<div class="t" style="left:937px;width:40px;text-align:right;top:483.5px;font-size:8px;color:#4f4f4f">1</div>
<div class="t" style="left:1129px;width:40px;text-align:right;top:483.5px;font-size:7px;color:#d0d0d0">∅</div>
<div class="t" style="left:70px;width:18px;text-align:right;top:497.5px;font-size:8px;color:#666">4</div>
<div class="t" style="left:99px;top:497.5px;font-size:8px;color:#4f4f4f">2500 or Above</div>
<div class="t" style="left:746px;width:40px;text-align:right;top:497.5px;font-size:8px;color:#4f4f4f">1</div>
<div class="t" style="left:937px;width:40px;text-align:right;top:497.5px;font-size:7px;color:#d0d0d0">∅</div>
<div class="t" style="left:1129px;width:40px;text-align:right;top:497.5px;font-size:8px;color:#4f4f4f">2</div>
<!-- ===== map card ===== -->
<div class="card" style="left:77px;top:532px;width:1097px;height:200px"></div>
<div class="t" style="left:597px;top:542px;font-size:11.9px;color:#45494d">Policy Map</div>
<div class="a" style="left:1157px;top:541px;width:2px;height:2px;border-radius:1px;background:#888"></div>
<div class="a" style="left:1157px;top:544.5px;width:2px;height:2px;border-radius:1px;background:#888"></div>
<div class="a" style="left:1157px;top:548px;width:2px;height:2px;border-radius:1px;background:#888"></div>
<div id="map" class="a" style="left:77px;top:561px;width:1097px;height:149px;overflow:hidden"></div>
<!--MAP-->
<svg style="left:77px;top:561px;overflow:hidden" width="1097" height="149" viewBox="77 561 1097 149">
<rect x="77" y="561" width="1097" height="149" fill="#f7f7f5"/>
<path d="M150 561 L160 710" fill="none" stroke="#ebebe9" stroke-width="1"/>
<path d="M190 561 L188 640 L200 710" fill="none" stroke="#ebebe9" stroke-width="1"/>
<path d="M300 561 L300 710" fill="none" stroke="#ebebe9" stroke-width="1"/>
<path d="M270 561 L330 620 L345 710" fill="none" stroke="#ebebe9" stroke-width="1"/>
<path d="M380 561 L372 640 L380 710" fill="none" stroke="#ebebe9" stroke-width="1"/>
<path d="M77 640 L200 650 L330 655 L420 640 L520 650 L600 630" fill="none" stroke="#ebebe9" stroke-width="1"/>
<path d="M77 600 L180 598 L330 600 L420 610 L500 620 L590 616" fill="none" stroke="#ebebe9" stroke-width="1"/>
<path d="M230 561 L240 620 L250 710" fill="none" stroke="#ebebe9" stroke-width="1"/>
<path d="M450 561 L460 640 L470 710" fill="none" stroke="#ebebe9" stroke-width="1"/>
<path d="M520 561 L515 620 L520 710" fill="none" stroke="#ebebe9" stroke-width="1"/>
<path d="M77 690 L200 686 L330 690 L480 680 L600 690" fill="none" stroke="#ebebe9" stroke-width="1"/>
<path d="M700 561 L720 640 L740 710" fill="none" stroke="#ebebe9" stroke-width="1"/>
<path d="M860 561 L870 640 L880 710" fill="none" stroke="#ebebe9" stroke-width="1"/>
<path d="M760 640 L860 650 L960 640 L1060 650 L1174 640" fill="none" stroke="#ebebe9" stroke-width="1"/>
<path d="M760 580 L860 590 L960 585 L1060 600 L1174 590" fill="none" stroke="#ebebe9" stroke-width="1"/>
<path d="M920 561 L930 620 L940 710" fill="none" stroke="#ebebe9" stroke-width="1"/>
<path d="M1000 561 L1010 640 L1000 710" fill="none" stroke="#ebebe9" stroke-width="1"/>
<path d="M780 690 L900 680 L1000 700 L1174 690" fill="none" stroke="#ebebe9" stroke-width="1"/>
<path d="M1060 561 L1050 640 L1060 710" fill="none" stroke="#ebebe9" stroke-width="1"/>
<path d="M1140 561 L1130 640 L1140 710" fill="none" stroke="#ebebe9" stroke-width="1"/>
<rect x="1015" y="585" width="100" height="90" rx="30" fill="#f3f3f1"/>
<path d="M563 561 C570 575 575 590 578 598 C582 606 586 612 588 616" fill="none" stroke="#d9dcde" stroke-width="1.2"/>
<path d="M674 639.5 C690 630 720 612 740 605 C770 600 800 603 819 606.6 C830 610 840 617 853 629 C862 635 880 640 898 644 C910 650 915 656 922 658 C935 652 946 644 967 624 C975 617 980 613 1008 610 C1015 605 1020 596 1025 586 C1030 576 1039 568 1049 562" fill="none" stroke="#d3d7da" stroke-width="1.6"/>
<path d="M1121.6 561 C1118 575 1111 589 1104 606.6 C1103 615 1104 623 1097.5 641 C1090 655 1084 665 1070 692.5 C1066 700 1063 706 1062 710" fill="none" stroke="#d3d7da" stroke-width="1.6"/>
<polygon points="576.3,614 590.6,616 600.8,619.1 612,624.2 615.1,632.3 619.2,642.6 615.1,652.8 606.9,663 598.8,671.1 592.7,679.3 589.6,687.4 576.3,688.5 576.3,679.3 584.5,675.2 580.4,671.1 588.6,665 588.6,654.8 580.4,646.6 578.4,632.3 576.3,622.1" fill="#f4e37c" stroke="#e8d46a" stroke-width="0.6"/>
<polygon points="623.3,581.3 629.4,576.2 641.6,575.2 643.7,584.4 649.8,582.3 655.9,584.4 664.1,587.4 671.2,595.6 674.3,604.8 672.2,610.9 662,614 653.9,619.1 647.8,616 639.6,616 631.4,613 623.3,614 615.1,610.9 609,606.8 611,600.7 619.2,595.6 621.2,587.4" fill="#7bc46f" stroke="#64b35c" stroke-width="0.6"/>
<polygon points="612,624.2 619.2,634.4 627.3,638.5 637.6,646.6 649.8,648.7 662,644.6 674.3,639.5 664.1,646.6 658,652.8 660,663 668.2,677.2 662,683.4 649.8,681.3 637.6,679.3 627.3,681.3 625.3,687.4 633.5,695.6 634.5,703.8 627.3,707.9 617.1,703.8 602.9,699.7 598.8,711 590.6,711 592.7,687.4 598.8,671.1 606.9,663 615.1,652.8 619.2,642.6 615.1,632.3" fill="#7bc46f" stroke="#64b35c" stroke-width="0.6"/>
<g font-family="Liberation Sans" font-size="8" fill="#66696c" stroke="#f7f7f5" stroke-width="1.6" paint-order="stroke">
<text x="110" y="583.9">ant Hill</text>
<text x="219" y="590.9">Warrensburg</text>
<text x="167" y="604.4">Holden</text>
<text x="352" y="608.4">Sedalia</text>
<text x="382.5" y="615.9">Smithton</text>
<text x="240" y="646.4">Leeton</text>
<text x="300" y="634.9">Green Ridge</text>
<text x="279" y="661.9">Windsor</text>
<text x="81" y="677.9">Archie</text>
<text x="168" y="684.4">Urich</text>
<text x="254" y="682.4">Calhoun</text>
<text x="352" y="684.9">Cole Camp</text>
<text x="326.5" y="705.9">Lincoln</text>
<text x="452" y="582.9">Bunceton</text>
<text x="526" y="589.9">Jamestown</text>
<text x="587" y="586.9">Ashland</text>
<text x="462.6" y="623.9">Tipton</text>
<text x="509" y="632.4">California</text>
<text x="410.7" y="644.9">Florence</text>
<text x="536.5" y="668.4">Russellville</text>
<text x="411" y="690.9">Stover</text>
<text x="441.7" y="693.4">Versailles</text>
<text x="609.7" y="628.9">Holts Summit</text>
<text x="703.8" y="617.9">Chamois</text>
<text x="695" y="679.4">Linn</text>
<text x="853.4" y="572.9">Warrenton</text>
<text x="923" y="575.4">Wentzville</text>
<text x="964.5" y="575.4">O&#39;Fallon</text>
<text x="1013" y="583.9">St Charles</text>
<text x="1091.7" y="609.9">Granite City</text>
<text x="1133" y="618.9">Collinsville</text>
<text x="1157" y="642.9">O&#39;Fall</text>
<text x="1137" y="665.9">Belleville</text>
<text x="783" y="608.9">Hermann</text>
<text x="832.8" y="638.9">New Haven</text>
<text x="882" y="654.4">Washington</text>
<text x="1029" y="668.4">Fenton</text>
<text x="956.6" y="677.9">Pacific</text>
<text x="893.7" y="687.9">Union</text>
<text x="1046" y="689.4">Arnold</text>
<text x="814" y="703.4">Gerald</text>
<text x="665" y="563.4">Fulton</text>
<text x="284" y="596.9" text-anchor="middle">Whiteman</text><text x="284" y="604.9" text-anchor="middle">AFB</text>
<defs><clipPath id="hc"><rect x="77" y="619.5" width="40" height="8"/></clipPath></defs><g clip-path="url(#hc)"><text transform="translate(0 1244) scale(1 -1)" x="77" y="626" font-family="Liberation Sans" font-size="8" fill="#555">Harrisonvill</text></g>
</g>
<g font-family="Liberation Sans" font-size="8">
<text x="642.5" y="599.9" text-anchor="middle" fill="#3d6e3a">New</text><text x="642.5" y="607.9" text-anchor="middle" fill="#3d6e3a">Bloomfield</text>
<text x="596" y="647.9" fill="#9a8a40">Jefferson City</text>
<text x="638" y="669.9" fill="#3d6e3a">Taos</text>
</g>
<text x="1075" y="634.5" font-family="Liberation Sans" font-size="13" fill="#2f3235" stroke="#f7f7f5" stroke-width="0.4" paint-order="stroke" textLength="52">St. Louis</text>
<g font-family="Liberation Sans" font-size="5" text-anchor="middle" fill="#555">
<ellipse cx="132.5" cy="628" rx="6" ry="5" fill="#fff" stroke="#8c8c8c" stroke-width="0.9"/>
<text x="132.5" y="629.6" stroke="none">2</text>
<ellipse cx="217" cy="640.5" rx="6" ry="5" fill="#fff" stroke="#8c8c8c" stroke-width="0.9"/>
<text x="217" y="642.1" stroke="none">2</text>
<ellipse cx="143" cy="663" rx="6" ry="5" fill="#fff" stroke="#8c8c8c" stroke-width="0.9"/>
<text x="143" y="664.6" stroke="none">7</text>
<ellipse cx="237" cy="674" rx="6" ry="5" fill="#fff" stroke="#8c8c8c" stroke-width="0.9"/>
<text x="237" y="675.6" stroke="none">13</text>
<ellipse cx="215" cy="602.5" rx="6" ry="5" fill="#fff" stroke="#8c8c8c" stroke-width="0.9"/>
<text x="215" y="604.1" stroke="none">58</text>
<ellipse cx="317" cy="566" rx="7" ry="5" fill="#fff" stroke="#8c8c8c" stroke-width="0.9"/>
<text x="317" y="567.6" stroke="none">127</text>
<ellipse cx="320" cy="604" rx="7" ry="5" fill="#fff" stroke="#8c8c8c" stroke-width="0.9"/>
<text x="320" y="605.6" stroke="none">127</text>
<ellipse cx="456.5" cy="596" rx="6" ry="5" fill="#fff" stroke="#8c8c8c" stroke-width="0.9"/>
<text x="456.5" y="597.6" stroke="none">5</text>
<ellipse cx="541" cy="607" rx="6" ry="5" fill="#fff" stroke="#8c8c8c" stroke-width="0.9"/>
<text x="541" y="608.6" stroke="none">87</text>
<ellipse cx="417.5" cy="627.5" rx="7" ry="5" fill="#fff" stroke="#8c8c8c" stroke-width="0.9"/>
<text x="417.5" y="629.1" stroke="none">135</text>
<ellipse cx="471" cy="641" rx="6" ry="5" fill="#fff" stroke="#8c8c8c" stroke-width="0.9"/>
<text x="471" y="642.6" stroke="none">5</text>
<ellipse cx="491.4" cy="703" rx="6" ry="5" fill="#fff" stroke="#8c8c8c" stroke-width="0.9"/>
<text x="491.4" y="704.6" stroke="none">52</text>
<ellipse cx="700.5" cy="654" rx="7" ry="5" fill="#fff" stroke="#8c8c8c" stroke-width="0.9"/>
<text x="700.5" y="655.6" stroke="none">100</text>
<ellipse cx="790" cy="575" rx="6" ry="5" fill="#fff" stroke="#8c8c8c" stroke-width="0.9"/>
<text x="790" y="576.6" stroke="none">19</text>
<ellipse cx="806" cy="596" rx="6" ry="5" fill="#fff" stroke="#8c8c8c" stroke-width="0.9"/>
<text x="806" y="597.6" stroke="none">94</text>
<ellipse cx="869.6" cy="606" rx="6" ry="5" fill="#fff" stroke="#8c8c8c" stroke-width="0.9"/>
<text x="869.6" y="607.6" stroke="none">47</text>
<ellipse cx="786" cy="623" rx="7" ry="5" fill="#fff" stroke="#8c8c8c" stroke-width="0.9"/>
<text x="786" y="624.6" stroke="none">100</text>
<ellipse cx="941" cy="643" rx="6" ry="5" fill="#fff" stroke="#8c8c8c" stroke-width="0.9"/>
<text x="941" y="644.6" stroke="none">94</text>
<ellipse cx="794" cy="660" rx="6" ry="5" fill="#fff" stroke="#8c8c8c" stroke-width="0.9"/>
<text x="794" y="661.6" stroke="none">19</text>
<ellipse cx="925" cy="664" rx="7" ry="5" fill="#fff" stroke="#8c8c8c" stroke-width="0.9"/>
<text x="925" y="665.6" stroke="none">100</text>
<ellipse cx="106" cy="597" rx="6" ry="5" fill="#fff" stroke="#8c8c8c" stroke-width="0.9"/>
<path d="M322.5 583.5 H333.5 V589 Q333.5 592.8 328 593 Q322.5 592.8 322.5 589Z" fill="#fff" stroke="#8a8a8a" stroke-width="0.9"/>
<text x="328" y="589.8" stroke="none">50</text>
<path d="M350.1 635.5 H361.1 V641 Q361.1 644.8 355.6 645 Q350.1 644.8 350.1 641Z" fill="#fff" stroke="#8a8a8a" stroke-width="0.9"/>
<text x="355.6" y="641.8" stroke="none">65</text>
<path d="M424.5 607.5 H435.5 V613 Q435.5 616.8 430 617 Q424.5 616.8 424.5 613Z" fill="#fff" stroke="#8a8a8a" stroke-width="0.9"/>
<text x="430" y="613.8" stroke="none">50</text>
<path d="M560.5 630.5 H571.5 V636 Q571.5 639.8 566 640 Q560.5 639.8 560.5 636Z" fill="#fff" stroke="#8a8a8a" stroke-width="0.9"/>
<text x="566" y="636.8" stroke="none">50</text>
<path d="M668.5 695.5 H679.5 V701 Q679.5 704.8 674 705 Q668.5 704.8 668.5 701Z" fill="#fff" stroke="#8a8a8a" stroke-width="0.9"/>
<text x="674" y="701.8" stroke="none">63</text>
<path d="M862.5 688.5 H873.5 V694 Q873.5 697.8 868 698 Q862.5 697.8 862.5 694Z" fill="#fff" stroke="#8a8a8a" stroke-width="0.9"/>
<text x="868" y="694.8" stroke="none">50</text>
<path d="M795.5 696.0 H806.5 V701.5 Q806.5 705.3 801 705.5 Q795.5 705.3 795.5 701.5Z" fill="#fff" stroke="#8a8a8a" stroke-width="0.9"/>
<text x="801" y="702.3" stroke="none">50</text>
<path d="M591.5 665.5 H602.5 V671 Q602.5 674.8 597 675 Q591.5 674.8 591.5 671Z" fill="#fff" stroke="#8a8a8a" stroke-width="0.9"/>
<text x="597" y="671.8" stroke="none">54</text>
</g>
<g font-family="Liberation Sans" font-size="4.5" text-anchor="middle" fill="#fff">
<path d="M1057.5 578 Q1063 576 1068.5 578 V583 Q1068 586.5 1063 587.5 Q1058 586.5 1057.5 583Z" fill="#3b66c4"/>
<path d="M1057.5 578 Q1063 576 1068.5 578 V579.8 H1057.5Z" fill="#d04646"/>
<text x="1063" y="584">270</text>
<path d="M1066.5 596 Q1072 594 1077.5 596 V601 Q1077 604.5 1072 605.5 Q1067 604.5 1066.5 601Z" fill="#3b66c4"/>
<path d="M1066.5 596 Q1072 594 1077.5 596 V597.8 H1066.5Z" fill="#d04646"/>
<text x="1072" y="602">70</text>
<path d="M984.5 611 Q990 609 995.5 611 V616 Q995 619.5 990 620.5 Q985 619.5 984.5 616Z" fill="#3b66c4"/>
<path d="M984.5 611 Q990 609 995.5 611 V612.8 H984.5Z" fill="#d04646"/>
<text x="990" y="617">64</text>
<path d="M1039.5 642 Q1045 640 1050.5 642 V647 Q1050 650.5 1045 651.5 Q1040 650.5 1039.5 647Z" fill="#3b66c4"/>
<path d="M1039.5 642 Q1045 640 1050.5 642 V643.8 H1039.5Z" fill="#d04646"/>
<text x="1045" y="648">270</text>
<path d="M1063.5 659 Q1069 657 1074.5 659 V664 Q1074 667.5 1069 668.5 Q1064 667.5 1063.5 664Z" fill="#3b66c4"/>
<path d="M1063.5 659 Q1069 657 1074.5 659 V660.8 H1063.5Z" fill="#d04646"/>
<text x="1069" y="665">55</text>
<path d="M982.5 663 Q988 661 993.5 663 V668 Q993 671.5 988 672.5 Q983 671.5 982.5 668Z" fill="#3b66c4"/>
<path d="M982.5 663 Q988 661 993.5 663 V664.8 H982.5Z" fill="#d04646"/>
<text x="988" y="669">44</text>
<path d="M921.5 685 Q927 683 932.5 685 V690 Q932 693.5 927 694.5 Q922 693.5 921.5 690Z" fill="#3b66c4"/>
<path d="M921.5 685 Q927 683 932.5 685 V686.8 H921.5Z" fill="#d04646"/>
<text x="927" y="691">44</text>
<path d="M1110.2 645 Q1115.7 643 1121.2 645 V650 Q1120.7 653.5 1115.7 654.5 Q1110.7 653.5 1110.2 650Z" fill="#3b66c4"/>
<path d="M1110.2 645 Q1115.7 643 1121.2 645 V646.8 H1110.2Z" fill="#d04646"/>
<text x="1115.7" y="651">255</text>
<path d="M1151.5 586 Q1157 584 1162.5 586 V591 Q1162 594.5 1157 595.5 Q1152 594.5 1151.5 591Z" fill="#3b66c4"/>
<path d="M1151.5 586 Q1157 584 1162.5 586 V587.8 H1151.5Z" fill="#d04646"/>
<text x="1157" y="592">27</text>
</g>
<rect x="77" y="684" width="42" height="26" fill="#ffffff" fill-opacity="0.6"/>
<defs><linearGradient id="lg" x1="0" y1="0" x2="0" y2="1"><stop offset="0" stop-color="#e23a3a"/><stop offset="1" stop-color="#f39a3a"/></linearGradient></defs>
<rect x="90" y="689" width="7" height="21" fill="url(#lg)"/>
<rect x="88" y="686" width="11" height="4" fill="#f0d0d0" stroke="#999" stroke-width="0.5"/>
<text x="81" y="703" font-family="Liberation Sans" font-size="8" fill="#9aa0a6">Adrian</text>
<path d="M702 667.5 C700 665.5 701 663 703 664.5 L705 666.5 L704 661 C703.8 659 706 658.8 706.5 661 L707.5 664.5 L707.2 659.5 C707.2 657.3 709.6 657.3 709.7 659.5 L710.2 664.5 L711 660.5 C711.4 658.5 713.6 658.8 713.4 661 L713 665.5 L714.3 663 C715 661.2 717 662 716.4 664 L714.2 671 C713.3 674 711.5 675.5 709 675.5 L707.5 675.5 C705.5 675.2 704.5 673.5 703.3 671.5 Z" fill="#fff" stroke="#222" stroke-width="0.9" stroke-linejoin="round"/>
</svg>
<div class="a" style="left:84px;top:567px;width:27px;height:52px;background:#fff;border-radius:2px;box-shadow:0 1px 2px rgba(0,0,0,.12)"></div>
<svg style="left:92px;top:576px" width="11" height="11" viewBox="0 0 11 11"><path d="M5.5 0.5V10.5M0.5 5.5H10.5" stroke="#444" stroke-width="1.1"/></svg>
<div class="a" style="left:92.5px;top:607.5px;width:10px;height:1.1px;background:#444"></div>
<div class="a" style="left:1142px;top:568px;width:26px;height:26px;background:#fff;border-radius:2px;box-shadow:0 1px 3px rgba(0,0,0,.25)"></div>
<svg style="left:1149px;top:575px" width="12" height="12" viewBox="0 0 12 12"><path d="M0.7 4V0.7H4M8 0.7H11.3V4M11.3 8V11.3H8M4 11.3H0.7V8" fill="none" stroke="#555" stroke-width="1.3"/></svg>
<div class="a" style="left:1142px;top:676px;width:26px;height:26px;background:#fff;border-radius:13px;box-shadow:0 1px 3px rgba(0,0,0,.25)"></div>
<svg style="left:1147px;top:681px" width="16" height="16" viewBox="0 0 16 16"><path d="M6 3L8 1L10 3M6 13L8 15L10 13M3 6L1 8L3 10M13 6L15 8L13 10" fill="none" stroke="#555" stroke-width="1.2"/></svg>
<!--/MAP-->


<!-- outer scrollbar -->
<div class="a" style="left:1269px;top:164px;width:11px;height:546px;background:#eef0f1"></div>
<svg style="left:1271px;top:166px" width="7" height="4" viewBox="0 0 7 4"><path d="M0 4H7L3.5 0Z" fill="#9aa3a7"/></svg>
<div class="a" style="left:1269px;top:174px;width:11px;height:435px;background:#b4c1c6"></div>
<svg style="left:1271px;top:701px" width="7" height="4" viewBox="0 0 7 4"><path d="M0 0H7L3.5 4Z" fill="#c5cacd"/></svg>
<div id="foot" class="a"></div>
<div class="t" style="left:5px;top:712px;font-size:6.6px;color:#e8eaeb">EZLynx Five [G05] (ANE_ryanb)</div>
<div class="t" style="left:1174px;top:712px;width:100px;text-align:right;font-size:6.6px;color:#e8eaeb">© EZLynx. All Rights Reserved</div>
</body></html>
